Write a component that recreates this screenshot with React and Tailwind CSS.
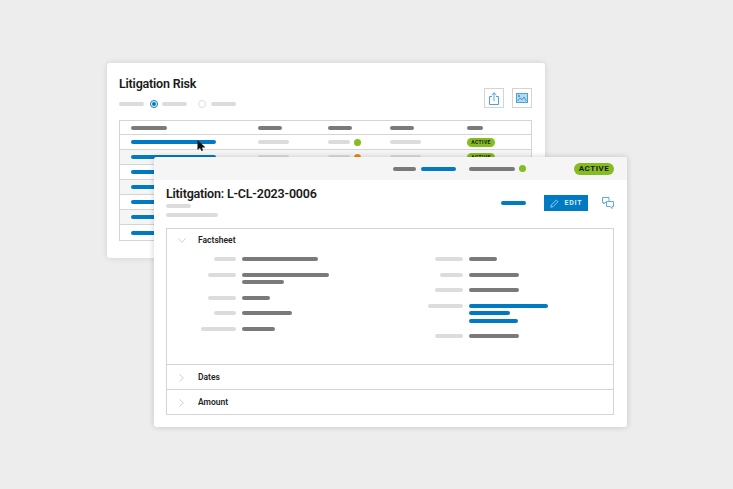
import React from 'react';

const FONT = 'font-["Roboto",sans-serif]';

const Bar = ({ w, color = 'bg-[#dcdcdc]' }) => (
  <div className={`h-1 rounded-full ${color}`} style={{ width: w }} />
);

const Gray = ({ w }) => <Bar w={w} color="bg-[#7a7a7a]" />;
const Blue = ({ w }) => <Bar w={w} color="bg-[#007ac3]" />;

const Dot = ({ color }) => <div className={`w-[7px] h-[7px] rounded-full ${color}`} />;

const tableRows = [
  { dot: 'bg-[#85bc20]' },
  { dot: 'bg-[#ea8f00]', shaded: true },
  { dot: 'bg-[#85bc20]' },
  { dot: 'bg-[#85bc20]', shaded: true },
  { dot: 'bg-[#85bc20]' },
  { dot: 'bg-[#85bc20]', shaded: true },
  { dot: 'bg-[#85bc20]' },
];

const leftFields = [
  { label: 22, values: [{ w: 76 }] },
  { label: 28, values: [{ w: 87 }, { w: 42 }] },
  { label: 28, values: [{ w: 28 }] },
  { label: 22, values: [{ w: 50 }] },
  { label: 35, values: [{ w: 33 }] },
];

const rightFields = [
  { label: 28, values: [{ w: 28 }] },
  { label: 23, values: [{ w: 50 }] },
  { label: 28, values: [{ w: 50 }] },
  { label: 35, values: [{ w: 79, blue: true }, { w: 41, blue: true }, { w: 49, blue: true }] },
  { label: 28, values: [{ w: 50 }] },
];

const FieldColumn = ({ fields, labelWidth }) => (
  <div className="flex flex-col gap-[11.5px]">
    {fields.map((field, i) => (
      <div key={i} className="flex items-start">
        <div className="flex justify-end" style={{ width: labelWidth }}>
          <Bar w={field.label} />
        </div>
        <div className="ml-[5.5px] flex flex-col gap-[3.5px]">
          {field.values.map((v, j) => (v.blue ? <Blue key={j} w={v.w} /> : <Gray key={j} w={v.w} />))}
        </div>
      </div>
    ))}
  </div>
);

const ShareIcon = () => (
  <svg width="10" height="13" viewBox="0 0 10 13" fill="none" stroke="#4ba3dc" strokeWidth="1">
    <path d="M3 4.500H.5v8h9v-8H7" />
    <path d="M5 9V.8M2.700 3 5 .8 7.300 3" />
  </svg>
);

const ImageIcon = () => (
  <svg width="12" height="10" viewBox="0 0 12 10" fill="none">
    <rect x="0.5" y="0.5" width="11" height="9" fill="#b5d8ef" stroke="#4ba3dc" />
    <circle cx="3" cy="3" r="1" fill="#2f93d3" />
    <path d="M1.500 8 4 5 6 6.800 8 4 10.500 8" stroke="#2f93d3" strokeWidth="0.9" />
  </svg>
);

const PencilIcon = () => (
  <svg width="9" height="9" viewBox="0 0 9 9" fill="none" stroke="#9fd0ef" strokeWidth="0.9">
    <path d="M0.8 8.200 1.300 6 6.300 1 8 2.700 3 7.700Z" />
  </svg>
);

const ChatIcon = () => (
  <svg width="12" height="12" viewBox="0 0 12 12" fill="none" stroke="#4ba3dc" strokeWidth="0.9">
    <path d="M.5.5h6.500v5H3L1.800 7V5.500H.5Z" />
    <path d="M4.500 4.500h7v5H10v2L8.200 9.500H4.500Z" fill="white" />
  </svg>
);

const ChevronIcon = ({ open }) =>
  open ? (
    <svg width="8" height="5" viewBox="0 0 8 5" fill="none" stroke="#c4c4c4" strokeWidth="0.8" className="ml-[11px] mr-[12px]">
      <path d="M.4.4 4 4.400 7.600.4" />
    </svg>
  ) : (
    <svg width="5" height="8" viewBox="0 0 5 8" fill="none" stroke="#c4c4c4" strokeWidth="0.8" className="ml-[12px] mr-[14px]">
      <path d="M.4.400 4.400 4 .4 7.600" />
    </svg>
  );

const Cursor = () => (
  <svg width="10" height="12" viewBox="0 0 10 12" className="absolute left-[197px] top-[140px]">
    <path d="M0.500 0 L0.500 10 L3 8 L4.500 11 L6 10.500 L5 7.500 L8.500 7.500 Z" fill="#111" />
  </svg>
);

const AccordionHeader = ({ title, open }) => (
  <div className={`flex items-center ${open ? 'h-[23px]' : 'h-6 pt-[1px]'}`}>
    <ChevronIcon open={open} />
    <span className="text-[8.500px] leading-none font-semibold text-[#232323]">{title}</span>
  </div>
);

export default function App() {
  return (
    <div className={`relative w-[733px] h-[489px] overflow-hidden bg-[#ededed] ${FONT}`}>
      {/* list window, behind */}
      <div className="absolute left-[107px] top-[63px] w-[438px] h-[195px] bg-white rounded-[3px] shadow-[0_0_6px_rgba(0,0,0,0.12)] pl-3 pr-[13px] pt-[12px]">
        <div className="flex justify-between items-start h-[45px]">
          <div>
            <h1 className="text-[12.500px] leading-[18px] font-semibold tracking-[-0.2px] text-[#1a1a1a]">Litigation Risk</h1>
            <div className="flex items-center mt-[7px] h-[8px]">
              <Bar w={25} />
              <div className="ml-[6px] w-2 h-2 rounded-full border border-[#007ac3] flex items-center justify-center">
                <div className="w-1 h-1 rounded-full bg-[#007ac3]" />
              </div>
              <div className="ml-1"><Bar w={25} /></div>
              <div className="ml-[11px] w-2 h-2 rounded-full border border-[#dcdcdc]" />
              <div className="ml-[5px]"><Bar w={25} /></div>
            </div>
          </div>
          <div className="flex gap-2 mt-[13px]">
            <div className="w-5 h-5 border border-[#d4d4d4] flex items-center justify-center"><ShareIcon /></div>
            <div className="w-5 h-5 border border-[#d4d4d4] flex items-center justify-center"><ImageIcon /></div>
          </div>
        </div>
        <div className="border border-[#d4d4d4] w-[413px] h-[121px]">
          <div className="grid grid-cols-[127px_70px_62px_77px_1fr] items-center pl-[11px] h-[14px] border-b border-[#d4d4d4]">
            <Gray w={36} />
            <Gray w={24} />
            <Gray w={24} />
            <Gray w={24} />
            <Gray w={16} />
          </div>
          {tableRows.map((row, i) => (
            <div
              key={i}
              className={`grid grid-cols-[127px_70px_62px_77px_1fr] items-center pl-[11px] h-[15px] border-b border-[#d4d4d4] last:border-b-0 ${row.shaded ? 'bg-[#f5f5f5]' : 'bg-white'}`}
            >
              <Blue w={85} />
              <Bar w={31} />
              <div className="flex items-center gap-1">
                <Bar w={22} />
                <Dot color={row.dot} />
              </div>
              <Bar w={31} />
              <div className="w-[28px] h-[9px] rounded-full bg-[#85bc20] flex items-center justify-center text-[5px] leading-none font-bold tracking-[0.4px] text-[#1a1a1a]">
                ACTIVE
              </div>
            </div>
          ))}
        </div>
      </div>

      <Cursor />

      {/* detail window, in front */}
      <div className="absolute left-[154px] top-[157px] w-[473px] h-[270px] bg-white rounded-[3px] shadow-[0_0_6px_rgba(0,0,0,0.18)]">
        <div className="flex items-center h-[23px] bg-[#f5f5f5] rounded-t-[3px] pr-[13px]">
          <div className="ml-[239px]"><Gray w={23} /></div>
          <div className="ml-[5px]"><Blue w={35} /></div>
          <div className="ml-[13px]"><Gray w={46} /></div>
          <div className="ml-1"><Dot color="bg-[#85bc20]" /></div>
          <div className="ml-auto w-[40px] h-[12px] rounded-full bg-[#85bc20] flex items-center justify-center text-[8px] leading-none font-bold tracking-[0.5px] text-[#1a1a1a]">
            ACTIVE
          </div>
        </div>
        <div className="flex items-start justify-between h-[48px] pl-3 pr-[13px]">
          <div className="pt-[5px]">
            <h2 className="text-[12.500px] leading-[18px] font-semibold tracking-[-0.2px] text-[#1a1a1a]">Lititgation: L-CL-2023-0006</h2>
            <div className="mt-[1px]"><Bar w={25} /></div>
            <div className="mt-[5px]"><Bar w={52} /></div>
          </div>
          <div className="flex items-center pt-[15px]">
            <Blue w={25} />
            <div className="ml-[18px] w-[44px] h-4 bg-[#007ac3] flex items-center justify-center gap-[6px] text-[7px] font-bold tracking-[0.8px] text-[#dcecf7]">
              <PencilIcon />
              EDIT
            </div>
            <div className="ml-[14px]"><ChatIcon /></div>
          </div>
        </div>
        <div className="ml-3 mr-[13px] border border-[#d4d4d4] h-[187px] flex flex-col">
          <AccordionHeader title="Factsheet" open />
          <div className="grid grid-cols-[222px_1fr] h-[112px] pt-[5px]">
            <FieldColumn fields={leftFields} labelWidth={69} />
            <FieldColumn fields={rightFields} labelWidth={74} />
          </div>
          <div className="border-t border-[#d4d4d4]"><AccordionHeader title="Dates" /></div>
          <div className="border-t border-[#d4d4d4]"><AccordionHeader title="Amount" /></div>
        </div>
      </div>
    </div>
  );
}
